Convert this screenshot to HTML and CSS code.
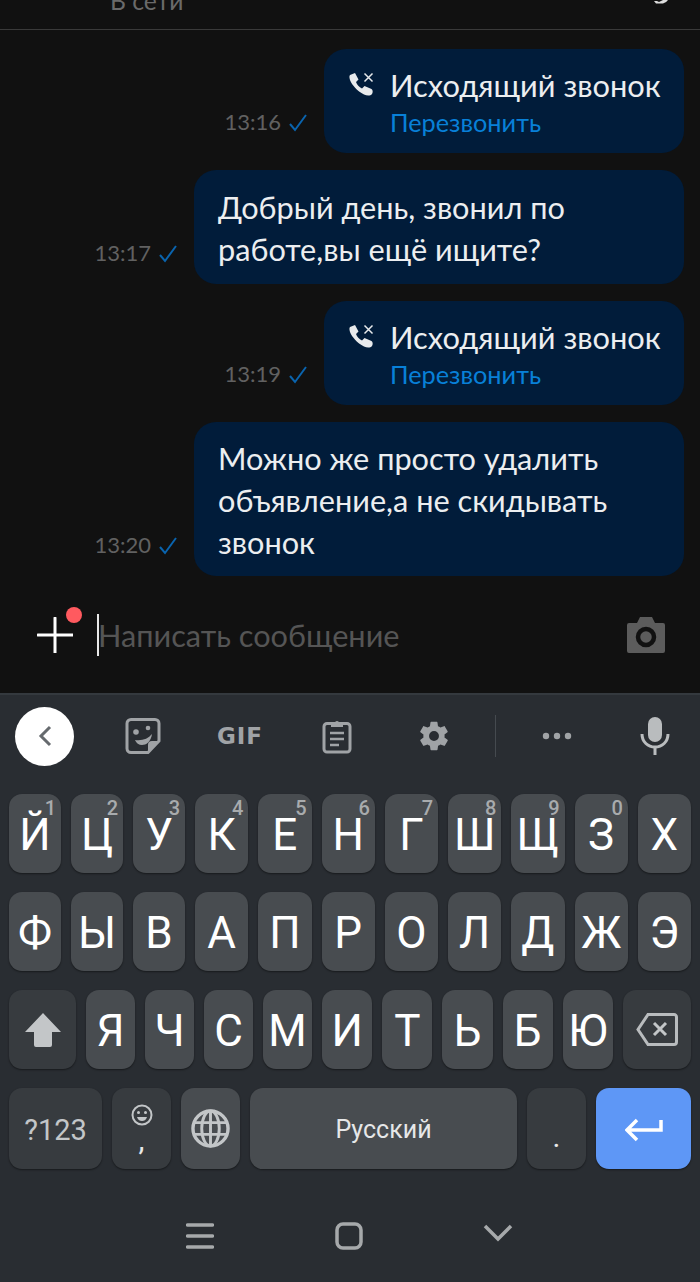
FILE: index.html
```html
<!DOCTYPE html>
<html lang="ru">
<head>
<meta charset="utf-8">
<title>Чат</title>
<link rel="stylesheet" href="styles.css">
</head>
<body>
<div class="app">
  <header class="top">
    <span class="status">В сети</span>
    <svg class="top-icon" width="14" height="4" viewBox="0 0 14 4"><path d="M0 1h3l2 1 4-2h5q-2 3-5 3.500H2z" fill="#ddd"/></svg>
  </header>
  <main class="chat">
    <div class="row">
      <span class="time">13:16</span>
      <svg class="check" width="18" height="18" viewBox="0 0 18 18"><path d="M1 10l5 6L17 1" fill="none" stroke="#0a64ae" stroke-width="2"/></svg>
      <div class="bubble call">
        <svg class="call-icon" width="28" height="28" viewBox="0 0 28 28"><path d="M2 5l5-2 3.500 6.500-2.500 2.500c1 3 3 5 6 6.500l2.500-2.500 7 3c1.500 1 1.500 3.500.5 5-1.500 2-5 2-8 .5C9 21 4 15 2 10 1.500 8 1 6 2 5z" fill="#e8eaec"/><path d="M16.500 3.500l8 8M24.500 3.500l-8 8" stroke="#e8eaec" stroke-width="1.500"/></svg>
        <div class="call-text">
          <div class="call-title">Исходящий звонок</div>
          <div class="call-link">Перезвонить</div>
        </div>
      </div>
    </div>
    <div class="row">
      <span class="time">13:17</span>
      <svg class="check" width="18" height="18" viewBox="0 0 18 18"><path d="M1 10l5 6L17 1" fill="none" stroke="#0a64ae" stroke-width="2"/></svg>
      <div class="bubble text wide">Добрый день, звонил по<br>работе,вы ещё ищите?</div>
    </div>
    <div class="row">
      <span class="time">13:19</span>
      <svg class="check" width="18" height="18" viewBox="0 0 18 18"><path d="M1 10l5 6L17 1" fill="none" stroke="#0a64ae" stroke-width="2"/></svg>
      <div class="bubble call">
        <svg class="call-icon" width="28" height="28" viewBox="0 0 28 28"><path d="M2 5l5-2 3.500 6.500-2.500 2.500c1 3 3 5 6 6.500l2.500-2.500 7 3c1.500 1 1.500 3.500.5 5-1.500 2-5 2-8 .5C9 21 4 15 2 10 1.500 8 1 6 2 5z" fill="#e8eaec"/><path d="M16.500 3.500l8 8M24.500 3.500l-8 8" stroke="#e8eaec" stroke-width="1.500"/></svg>
        <div class="call-text">
          <div class="call-title">Исходящий звонок</div>
          <div class="call-link">Перезвонить</div>
        </div>
      </div>
    </div>
    <div class="row">
      <span class="time">13:20</span>
      <svg class="check" width="18" height="18" viewBox="0 0 18 18"><path d="M1 10l5 6L17 1" fill="none" stroke="#0a64ae" stroke-width="2"/></svg>
      <div class="bubble text wide last">Можно же просто удалить<br>объявление,а не скидывать<br>звонок</div>
    </div>
  </main>
  <section class="composer">
    <div class="plus">
      <svg width="36" height="36" viewBox="0 0 36 36"><path d="M18 1v35M1 18h35" stroke="#fff" stroke-width="3" stroke-linecap="round"/></svg>
      <span class="dot"></span>
    </div>
    <span class="caret"></span>
    <span class="placeholder">Написать сообщение</span>
    <svg class="camera" width="40" height="38" viewBox="0 0 40 38"><path d="M3 7h8l3-6h12l3 6h8a2 2 0 0 1 2 2v26a2 2 0 0 1-2 2H3a2 2 0 0 1-2-2V9a2 2 0 0 1 2-2z" fill="#5c5c5c"/><circle cx="20" cy="21" r="8" fill="none" stroke="#111" stroke-width="4.500"/></svg>
  </section>
  <section class="keyboard">
    <div class="toolbar">
      <div class="back"><svg width="16" height="24" viewBox="0 0 16 24"><path d="M13 3L4 12l9 9" fill="none" stroke="#666a6e" stroke-width="3"/></svg></div>
      <svg class="sticker" width="38" height="38" viewBox="0 0 38 38"><path d="M7 2.500h24a4 4 0 0 1 4 4V24L24 35.500H7a4 4 0 0 1-4-4v-25a4 4 0 0 1 4-4z" fill="none" stroke="#a0a3a6" stroke-width="3"/><path d="M24 35V28a4 4 0 0 1 4-4h7z" fill="#a0a3a6"/><circle cx="12" cy="15" r="2.800" fill="#a0a3a6"/><circle cx="24" cy="11" r="2.300" fill="#a0a3a6"/><path d="M11 23c7 1 13-1 17-6-1 8-6 11-10 11-3 0-6-2-7-5z" fill="#a0a3a6"/></svg>
      <span class="gif">GIF</span>
      <svg class="clip" width="32" height="36" viewBox="0 0 32 36"><path d="M6 5.500h20a3 3 0 0 1 3 3V31a3 3 0 0 1-3 3H6a3 3 0 0 1-3-3V8.500a3 3 0 0 1 3-3z" fill="none" stroke="#a0a3a6" stroke-width="3"/><path d="M10 5h4a2 2 0 0 1 4 0h4v4H10z" fill="#a0a3a6"/><path d="M9 15h14M9 21h14M9 27h9" stroke="#a0a3a6" stroke-width="2.500"/></svg>
      <svg class="gear" width="34" height="34" viewBox="0 0 24 24"><path fill="#a0a3a6" d="M19.400 13c.04-.33.1-.66.1-1s-.06-.67-.1-1l2.100-1.650c.2-.15.25-.42.12-.64l-2-3.460c-.12-.22-.4-.3-.6-.22l-2.500 1c-.52-.4-1.080-.73-1.700-.98l-.37-2.650A.49.490 0 0 0 14 2h-4c-.25 0-.46.18-.5.420l-.37 2.650c-.62.25-1.180.6-1.700.98l-2.500-1c-.22-.08-.48 0-.6.220l-2 3.460c-.13.220-.07.490.120.640L4.570 11c-.04.330-.07.660-.07 1s.03.670.07 1l-2.110 1.650c-.19.150-.25.420-.120.640l2 3.460c.12.220.380.300.600.220l2.500-1c.520.400 1.080.730 1.700.980l.370 2.650c.040.240.250.420.500.420h4c.250 0 .460-.180.500-.420l.370-2.650c.620-.250 1.180-.590 1.700-.980l2.500 1c.220.080.480 0 .600-.220l2-3.460c.130-.220.070-.490-.120-.640zM12 15.500a3.500 3.500 0 1 1 0-7 3.500 3.500 0 0 1 0 7z"/></svg>
      <span class="divider"></span>
      <svg class="more" width="30" height="8" viewBox="0 0 30 8"><circle cx="4" cy="4" r="3.200" fill="#a0a3a6"/><circle cx="15" cy="4" r="3.200" fill="#a0a3a6"/><circle cx="26" cy="4" r="3.200" fill="#a0a3a6"/></svg>
      <svg class="mic" width="30" height="38" viewBox="0 0 30 38"><rect x="8" y="0" width="14" height="25" rx="7" fill="#b9bcbe"/><path d="M2 17c0 8 6 13 13 13s13-5 13-13" fill="none" stroke="#b9bcbe" stroke-width="3"/><path d="M15 29v9" stroke="#b9bcbe" stroke-width="3"/></svg>
    </div>
    <div class="keys">
      <div class="key-row">
        <div class="key letter n52"><span>Й</span><sup>1</sup></div>
        <div class="key letter n52"><span>Ц</span><sup>2</sup></div>
        <div class="key letter n52"><span>У</span><sup>3</sup></div>
        <div class="key letter"><span>К</span><sup>4</sup></div>
        <div class="key letter"><span>Е</span><sup>5</sup></div>
        <div class="key letter"><span>Н</span><sup>6</sup></div>
        <div class="key letter"><span>Г</span><sup>7</sup></div>
        <div class="key letter"><span>Ш</span><sup>8</sup></div>
        <div class="key letter"><span>Щ</span><sup>9</sup></div>
        <div class="key letter"><span>З</span><sup>0</sup></div>
        <div class="key letter"><span>Х</span></div>
      </div>
      <div class="key-row">
        <div class="key letter n52"><span>Ф</span></div>
        <div class="key letter n52"><span>Ы</span></div>
        <div class="key letter n52"><span>В</span></div>
        <div class="key letter"><span>А</span></div>
        <div class="key letter"><span>П</span></div>
        <div class="key letter"><span>Р</span></div>
        <div class="key letter"><span>О</span></div>
        <div class="key letter"><span>Л</span></div>
        <div class="key letter"><span>Д</span></div>
        <div class="key letter"><span>Ж</span></div>
        <div class="key letter"><span>Э</span></div>
      </div>
      <div class="key-row">
        <div class="key fn shift"><svg width="36" height="34" viewBox="0 0 36 34"><path d="M18 0l18 19H27v13a2 2 0 0 1-2 2H11a2 2 0 0 1-2-2V19H0z" fill="#c3c6c8"/></svg></div>
        <div class="key letter n49"><span>Я</span></div>
        <div class="key letter n49"><span>Ч</span></div>
        <div class="key letter n49"><span>С</span></div>
        <div class="key letter n49"><span>М</span></div>
        <div class="key letter"><span>И</span></div>
        <div class="key letter"><span>Т</span></div>
        <div class="key letter"><span>Ь</span></div>
        <div class="key letter"><span>Б</span></div>
        <div class="key letter"><span>Ю</span></div>
        <div class="key fn del"><svg width="42" height="33" viewBox="0 0 42 33"><path d="M12 1.500h26a2.500 2.500 0 0 1 2.500 2.500v25a2.500 2.500 0 0 1-2.500 2.500H12L2 16.500z" fill="none" stroke="#b9bcbe" stroke-width="3"/><path d="M18 10l12 12M30 10L18 22" stroke="#c3c6c8" stroke-width="3"/></svg></div>
      </div>
      <div class="key-row bottom">
        <div class="key fn sym">?123</div>
        <div class="key fn comma">
          <svg width="22" height="22" viewBox="0 0 22 22"><circle cx="11" cy="11" r="9.500" fill="none" stroke="#c3c6c8" stroke-width="2"/><circle cx="7.500" cy="8.500" r="1.500" fill="#c3c6c8"/><circle cx="14.500" cy="8.500" r="1.500" fill="#c3c6c8"/><path d="M6 13h10c-1 3-3 4-5 4s-4-1-5-4z" fill="#c3c6c8"/></svg>
          <span>,</span>
        </div>
        <div class="key letter globe"><svg width="39" height="39" viewBox="0 0 40 40"><circle cx="20" cy="20" r="18" fill="none" stroke="#c3c6c8" stroke-width="3.500"/><ellipse cx="20" cy="20" rx="9" ry="18" fill="none" stroke="#c3c6c8" stroke-width="3"/><path d="M2 14h36M2 26h36M20 2v36" stroke="#c3c6c8" stroke-width="3"/></svg></div>
        <div class="key letter space">Русский</div>
        <div class="key fn period">.</div>
        <div class="key enter"><svg width="38" height="24" viewBox="0 0 38 24"><path d="M12 2L2 12l10 10M2 12h34V2" fill="none" stroke="#fff" stroke-width="3.500"/></svg></div>
      </div>
    </div>
    <nav class="nav">
      <svg width="28" height="26" viewBox="0 0 28 26"><path d="M1.500 2h25M1.500 13h25M1.500 24h25" stroke="#a6a9ab" stroke-width="3.500" stroke-linecap="round"/></svg>
      <svg width="28" height="28" viewBox="0 0 28 28"><rect x="2" y="2" width="24" height="24" rx="6" fill="none" stroke="#a6a9ab" stroke-width="3.500"/></svg>
      <svg class="nav-down" width="30" height="18" viewBox="0 0 30 18"><path d="M2 2l13 13L28 2" fill="none" stroke="#a6a9ab" stroke-width="3.500"/></svg>
    </nav>
  </section>
</div>
</body>
</html>
```
FILE: styles.css
```css
* { box-sizing: border-box; }
html, body { margin: 0; padding: 0; background: #111; }
.app {
  width: 700px;
  height: 1282px;
  display: flex;
  flex-direction: column;
  overflow: hidden;
  font-family: "Lato", "Open Sans", sans-serif;
}
.top {
  height: 30px;
  flex: none;
  display: flex;
  justify-content: space-between;
  padding: 0 32px 0 110px;
  border-bottom: 1px solid #3a3a3a;
  overflow: hidden;
}
.status {
  font-size: 24.700px;
  line-height: 24px;
  margin-top: -11px;
  color: #6a6a6a;
}
.chat {
  height: 546px;
  flex: none;
  display: flex;
  flex-direction: column;
  gap: 17px;
  padding: 19px 16px 0 0;
  overflow: hidden;
}
.row {
  display: flex;
  justify-content: flex-end;
  align-items: flex-end;
}
.time {
  font-size: 22px;
  line-height: 28px;
  color: #616161;
  margin-bottom: 17px;
}
.check {
  margin: 0 17px 21px 8px;
}
.bubble {
  background: #011c3a;
  border-radius: 22px;
  color: #eceef0;
}
.call {
  width: 360px;
  height: 104px;
  display: flex;
  padding: 21px 0 0 24px;
  gap: 14px;
}
.call-icon { flex: none; }
.call-title {
  font-size: 30.800px;
  line-height: 34px;
  margin-top: -1px;
  white-space: nowrap;
}
.call-link {
  font-size: 25.300px;
  line-height: 36px;
  margin-top: 1px;
  color: #0880d8;
}
.wide {
  width: 490px;
  padding: 17px 24px 13px;
  font-size: 30.700px;
  line-height: 42px;
}
.last { padding: 16px 24px 12px; }
.composer {
  height: 117px;
  flex: none;
  display: flex;
  align-items: center;
  padding: 0 34px 0 37px;
  background: #111;
}
.plus {
  position: relative;
  width: 36px;
  height: 36px;
  margin-right: 24px;
}
.plus svg { display: block; }
.dot {
  position: absolute;
  left: 29px;
  top: -10px;
  width: 16px;
  height: 16px;
  border-radius: 50%;
  background: #ff5a5f;
}
.caret {
  width: 2px;
  height: 42px;
  background: #e8e8e8;
  flex: none;
}
.placeholder {
  flex: 1;
  font-size: 30.700px;
  color: #555;
  margin-left: -1px;
  padding-top: 2px;
}
.keyboard {
  flex: 1;
  display: flex;
  flex-direction: column;
  background: #292d32;
  border-top: 2px solid #34393e;
  font-family: "Roboto", sans-serif;
}
.toolbar {
  height: 99px;
  flex: none;
  display: flex;
  align-items: center;
  padding-bottom: 17px;
}
.toolbar > * { flex: none; }
.back {
  width: 59px;
  height: 59px;
  margin-left: 15px;
  border-radius: 50%;
  background: #fff;
  display: flex;
  align-items: center;
  justify-content: center;
}
.sticker { margin-left: 50px; }
.gif {
  margin-left: 56px;
  width: 44px;
  font-size: 23px;
  font-weight: 900;
  letter-spacing: 1px;
  color: #a0a3a6;
  font-family: "DejaVu Sans", sans-serif;
  text-align: center;
  white-space: nowrap;
  display: flex;
  justify-content: center;
}
.clip { margin-left: 59px; }
.gear { margin-left: 64px; }
.divider {
  width: 1px;
  height: 42px;
  margin-left: 44px;
  background: #454a4f;
}
.more { margin-left: 46px; }
.mic { margin-left: 68px; }
.keys {
  display: flex;
  flex-direction: column;
  gap: 19px;
  padding: 0 9px;
}
.key-row {
  height: 79px;
  display: flex;
  gap: 10px;
}
.key-row.bottom { height: 81px; }
.key {
  position: relative;
  border-radius: 13px;
  display: flex;
  align-items: center;
  justify-content: center;
  box-shadow: 0 1px 2px rgba(0, 0, 0, .45);
}
.letter {
  flex: 1 1 0;
  background: #484c50;
  color: #fff;
  font-size: 44px;
}
.letter span { margin-top: 2px; }
.n52 { flex: 0 0 52px; }
.n49 { flex: 0 0 49px; }
.key sup {
  position: absolute;
  right: 5px;
  top: 4px;
  font-size: 20px;
  font-weight: 500;
  line-height: 20px;
  color: #a8abad;
}
.fn { background: #373b3f; color: #c3c6c8; }
.shift { flex: 0 0 67px; }
.del { flex: 0 0 68px; }
.sym { flex: 0 0 93px; font-size: 29px; padding-top: 2px; }
.comma {
  flex: 0 0 59px;
  flex-direction: column;
  font-size: 30px;
  color: #e8e8e8;
  line-height: 28px;
}
.globe { flex: 0 0 59px; }
.space { flex: 0 0 267px; font-size: 25px; color: #e6e7e8; padding-top: 2px; }
.period { flex: 0 0 59px; font-size: 30px; color: #e8e8e8; padding-top: 16px; }
.enter { flex: 0 0 95px; background: #5e97f6; padding-top: 2px; }
.nav {
  flex: 1;
  display: flex;
  align-items: center;
  padding: 20px 187px 0 186px;
  justify-content: space-between;
}
.nav-down { margin-top: -6px; }
```
